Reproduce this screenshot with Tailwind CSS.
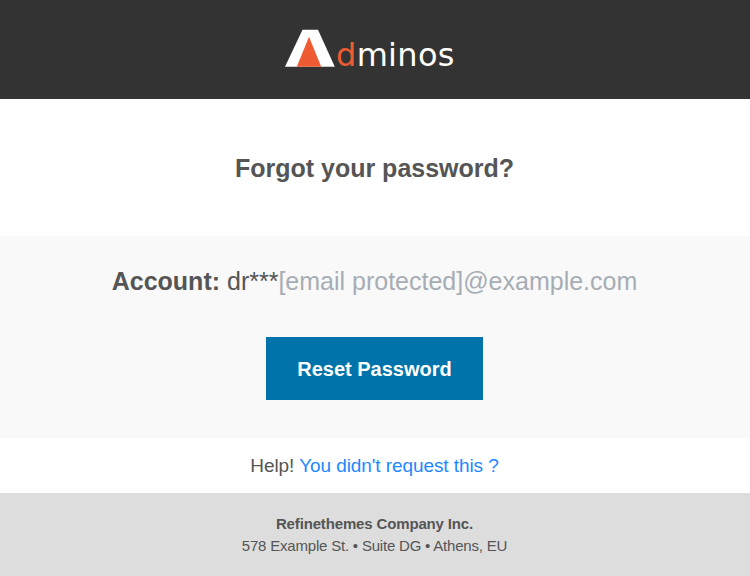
<!DOCTYPE html>
<html lang="en">
<head>
<meta charset="utf-8">
<title>Forgot your password?</title>
<script src="https://cdn.jsdelivr.net/npm/@tailwindcss/browser@4"></script>
</head>
<body class="bg-white font-['Liberation_Sans',Arial,sans-serif] text-[#555555] text-center">
<main class="flex h-[576px] w-[749px] flex-col">
  <header class="flex h-[99px] w-[750px] shrink-0 justify-center bg-[#333333]">
    <svg class="h-[99px] w-[180px]" viewBox="285 0 180 99" aria-label="Adminos">
      <path d="M302.5 29.7h15.5L334.8 66.8h-49.8z" fill="#fff"/>
      <path d="M309 36.8l12.2 30h-24.4z" fill="#ee5a32"/>
      <text x="336" y="66.2" font-family="DejaVu Sans, Verdana, sans-serif" font-size="32" textLength="118.5" fill="#fff"><tspan fill="#ee5a32">d</tspan>minos</text>
    </svg>
  </header>
  <section class="flex h-[137px] shrink-0 items-center justify-center">
    <h1 class="text-[25px] leading-[30px] font-bold">Forgot your password?</h1>
  </section>
  <section class="flex h-[202px] w-[750px] shrink-0 flex-col items-center bg-[#f9f9f9] pt-[30px] pr-px">
    <p class="text-[25px] leading-[30px] whitespace-nowrap"><b>Account:</b> dr***<span class="text-[#a7adb5]">[email protected]@example.com</span></p>
    <a class="mt-[41px] flex h-[63px] w-[217px] items-center justify-center bg-[#0073aa] text-[20px] font-bold text-white">Reset Password</a>
  </section>
  <section class="flex h-[55px] shrink-0 items-center justify-center">
    <p class="text-[19px] leading-[22px] tracking-[-0.08px]">Help! <a class="text-[#1e88ff]">You didn't request this ?</a></p>
  </section>
  <footer class="flex h-[83px] w-[750px] shrink-0 flex-col items-center bg-[#dddddd] pt-[20px] pr-px leading-[22px]">
    <b class="text-[15px] tracking-[-0.15px]">Refinethemes Company Inc.</b>
    <span class="text-[15px] tracking-[-0.2px]">578 Example St. • Suite DG • Athens, EU</span>
  </footer>
</main>
</body>
</html>
